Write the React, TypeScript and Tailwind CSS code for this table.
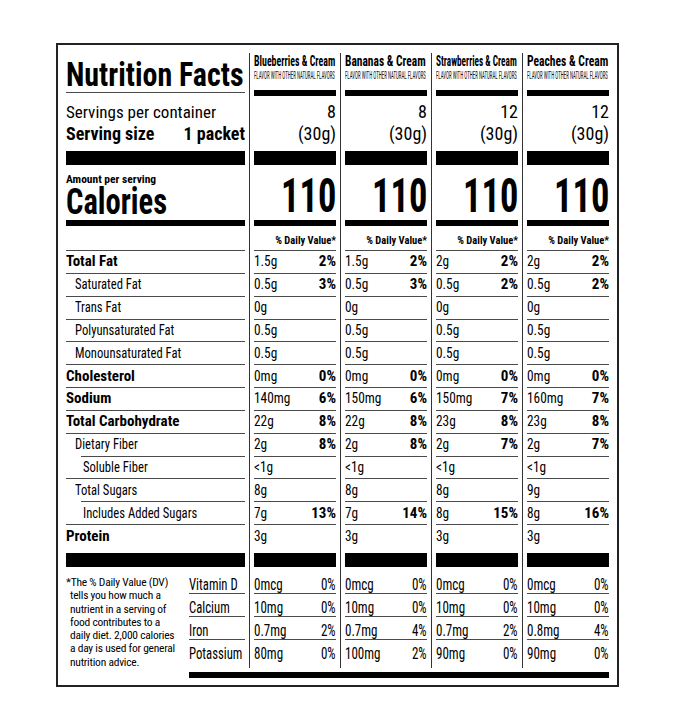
import { useLayoutEffect, useRef, useState, type ReactNode } from 'react';

type FitProps = { w: number; right?: boolean; className?: string; children: ReactNode };

function Fit({ w, right, className, children }: FitProps) {
  const ref = useRef<HTMLSpanElement>(null);
  const [s, setS] = useState(1);
  useLayoutEffect(() => {
    const measure = () => {
      const el = ref.current;
      if (el && el.offsetWidth) setS(w / el.offsetWidth);
    };
    measure();
    if (document.fonts && document.fonts.ready) document.fonts.ready.then(measure);
  }, [w]);
  return (
    <span
      ref={ref}
      className={`block w-max whitespace-nowrap ${right ? 'origin-right' : 'origin-left'} ${className ?? ''}`}
      style={{ transform: `scaleX(${s})` }}
    >
      {children}
    </span>
  );
}

type Nutrient = { label: string; level: 0 | 1 | 2; bold?: boolean; indentLine?: boolean };

const nutrients: Nutrient[] = [
  { label: 'Total Fat', level: 0, bold: true },
  { label: 'Saturated Fat', level: 1 },
  { label: 'Trans Fat', level: 1 },
  { label: 'Polyunsaturated Fat', level: 1 },
  { label: 'Monounsaturated Fat', level: 1 },
  { label: 'Cholesterol', level: 0, bold: true },
  { label: 'Sodium', level: 0, bold: true },
  { label: 'Total Carbohydrate', level: 0, bold: true },
  { label: 'Dietary Fiber', level: 1, indentLine: true },
  { label: 'Soluble Fiber', level: 2 },
  { label: 'Total Sugars', level: 1, indentLine: true },
  { label: 'Includes Added Sugars', level: 2 },
  { label: 'Protein', level: 0, bold: true },
];

type Flavor = {
  name: string;
  servings: string;
  values: [string, string][];
  vitamins: [string, string][];
};

const flavors: Flavor[] = [
  {
    name: 'Blueberries & Cream',
    servings: '8',
    values: [
      ['1.5g', '2%'], ['0.5g', '3%'], ['0g', ''], ['0.5g', ''], ['0.5g', ''], ['0mg', '0%'], ['140mg', '6%'],
      ['22g', '8%'], ['2g', '8%'], ['<1g', ''], ['8g', ''], ['7g', '13%'], ['3g', ''],
    ],
    vitamins: [['0mcg', '0%'], ['10mg', '0%'], ['0.7mg', '2%'], ['80mg', '0%']],
  },
  {
    name: 'Bananas & Cream',
    servings: '8',
    values: [
      ['1.5g', '2%'], ['0.5g', '3%'], ['0g', ''], ['0.5g', ''], ['0.5g', ''], ['0mg', '0%'], ['150mg', '6%'],
      ['22g', '8%'], ['2g', '8%'], ['<1g', ''], ['8g', ''], ['7g', '14%'], ['3g', ''],
    ],
    vitamins: [['0mcg', '0%'], ['10mg', '0%'], ['0.7mg', '4%'], ['100mg', '2%']],
  },
  {
    name: 'Strawberries & Cream',
    servings: '12',
    values: [
      ['2g', '2%'], ['0.5g', '2%'], ['0g', ''], ['0.5g', ''], ['0.5g', ''], ['0mg', '0%'], ['150mg', '7%'],
      ['23g', '8%'], ['2g', '7%'], ['<1g', ''], ['8g', ''], ['8g', '15%'], ['3g', ''],
    ],
    vitamins: [['0mcg', '0%'], ['10mg', '0%'], ['0.7mg', '2%'], ['90mg', '0%']],
  },
  {
    name: 'Peaches & Cream',
    servings: '12',
    values: [
      ['2g', '2%'], ['0.5g', '2%'], ['0g', ''], ['0.5g', ''], ['0.5g', ''], ['0mg', '0%'], ['160mg', '7%'],
      ['23g', '8%'], ['2g', '7%'], ['<1g', ''], ['9g', ''], ['8g', '16%'], ['3g', ''],
    ],
    vitamins: [['0mcg', '0%'], ['10mg', '0%'], ['0.8mg', '4%'], ['90mg', '0%']],
  },
];

const vitaminLabels = ['Vitamin D', 'Calcium', 'Iron', 'Potassium'];

const footnote = [
  '*The % Daily Value (DV)',
  'tells you how much a',
  'nutrient in a serving of',
  'food contributes to a',
  'daily diet. 2,000 calories',
  'a day is used for general',
  'nutrition advice.',
];

function LabelColumn() {
  return (
    <div className="flex w-[179px] flex-col">
      <div className="flex h-[40px] items-start border-b border-[#4a4a4a] pt-[5px]">
        <Fit w={178} className="text-[33px] leading-[33px] font-bold">Nutrition Facts</Fit>
      </div>
      <div className="h-[3px]" />
      <div className="h-[55px] pt-[5px] leading-[22px]">
        <div className="text-[17px]">Servings per container</div>
        <div className="flex justify-between text-[18px] font-bold">
          <span>Serving size</span>
          <span>1 packet</span>
        </div>
      </div>
      <div className="h-[14px] bg-black" />
      <div className="flex h-[55px] flex-col pt-[8px]">
        <div className="text-[11.5px] leading-[12px] font-bold">Amount per serving</div>
        <Fit w={101} className="text-[36px] leading-[34px] font-bold">Calories</Fit>
      </div>
      <div className="h-[6px] bg-black" />
      <div className="h-[25px] border-b border-[#4a4a4a]" />
      {nutrients.map((n, i) => (
        <div key={n.label} className="flex h-[22.85px] flex-col">
          <div
            className={`flex flex-1 items-center leading-[15px] ${
              n.level === 1 ? 'pl-[9px]' : n.level === 2 ? 'pl-[17px]' : ''
            }`}
          >
            {n.bold ? (
              <span className="whitespace-nowrap text-[15px] font-bold">{n.label}</span>
            ) : (
              <span className="inline-block origin-left scale-x-[0.87] whitespace-nowrap text-[14.5px]">{n.label}</span>
            )}
          </div>
          {i < nutrients.length - 1 && (
            <div className={`h-px bg-[#4a4a4a] ${n.indentLine ? 'ml-[15px]' : ''}`} />
          )}
        </div>
      ))}
      <div className="h-[5px]" />
      <div className="h-[14px] bg-black" />
      <div className="h-[4px]" />
      <div className="flex h-[97px]">
        <div className="w-[123px] pt-[5px] text-[11.5px] leading-[13.3px] tracking-[-0.02em]">
          {footnote.map((line, i) => (
            <div key={line} className={`whitespace-nowrap ${i > 0 ? 'pl-[4px]' : ''}`}>
              {line}
            </div>
          ))}
        </div>
        <div className="flex w-[56px] flex-col">
          {vitaminLabels.map((v, i) => (
            <div
              key={v}
              className={`flex h-[23px] items-end border-b text-[16.5px] leading-[16px] ${
                i < 3 ? 'border-[#4a4a4a]' : 'border-transparent'
              }`}
            >
              <span className="inline-block origin-left scale-x-[0.77] whitespace-nowrap">{v}</span>
            </div>
          ))}
        </div>
      </div>
    </div>
  );
}

function FlavorColumn({ f }: { f: Flavor }) {
  return (
    <div className="flex w-[91px] flex-col border-l border-[#333] px-[4px]">
      <div className="flex h-[37px] flex-col pt-[1px]">
        <Fit w={81} className="text-[15px] leading-[15px] font-bold">{f.name}</Fit>
        <Fit w={81} className="mt-[1px] text-[11px] leading-[11px] text-[#111]">
          FLAVOR WITH OTHER NATURAL FLAVORS
        </Fit>
      </div>
      <div className="h-[6px] bg-black" />
      <div className="h-[55px] pt-[5px] text-right text-[18px] leading-[22px]">
        <div>{f.servings}</div>
        <div>(30g)</div>
      </div>
      <div className="h-[14px] bg-black" />
      <div className="flex h-[55px] items-end justify-end">
        <Fit w={55} right className="text-[49px] leading-[48px] font-bold">110</Fit>
      </div>
      <div className="h-[6px] bg-black" />
      <div className="flex h-[25px] items-end justify-end border-b border-[#4a4a4a] pb-[4px] text-[10.5px] leading-[11px] font-bold">
        % Daily Value*
      </div>
      {f.values.map(([amt, pct], i) => (
        <div
          key={i}
          className={`flex h-[22.85px] items-center justify-between border-b text-[14.5px] leading-[15px] ${
            i < f.values.length - 1 ? 'border-[#4a4a4a]' : 'border-transparent'
          }`}
        >
          <span className="inline-block origin-left scale-x-[0.92] whitespace-nowrap">{amt}</span>
          <span className="whitespace-nowrap text-[15px] font-bold">{pct}</span>
        </div>
      ))}
      <div className="h-[5px]" />
      <div className="h-[14px] bg-black" />
      <div className="h-[4px]" />
      <div className="flex flex-col">
        {f.vitamins.map(([amt, pct], i) => (
          <div
            key={i}
            className={`flex h-[23px] items-end justify-between border-b text-[16.5px] leading-[16px] ${
              i < 3 ? 'border-[#4a4a4a]' : 'border-transparent'
            }`}
          >
            <span className="inline-block origin-left scale-x-[0.79] whitespace-nowrap">{amt}</span>
            <span className="inline-block origin-right scale-x-[0.79] whitespace-nowrap">{pct}</span>
          </div>
        ))}
      </div>
    </div>
  );
}

export default function App() {
  return (
    <div className="min-h-[719px] bg-white pl-[56px] pt-[43px] font-['Roboto_Condensed',sans-serif] text-black">
      <div className="flex w-[563px] flex-col border-2 border-[#222] pb-[7px] pl-[8px] pr-[4px] pt-[8px]">
        <div className="flex h-[615px]">
          <div className="mr-[4px]">
            <LabelColumn />
          </div>
          {flavors.map((f) => (
            <FlavorColumn key={f.name} f={f} />
          ))}
        </div>
        <div className="ml-[123px] mt-[4px] h-[6px] w-[420px] bg-black" />
      </div>
    </div>
  );
}
